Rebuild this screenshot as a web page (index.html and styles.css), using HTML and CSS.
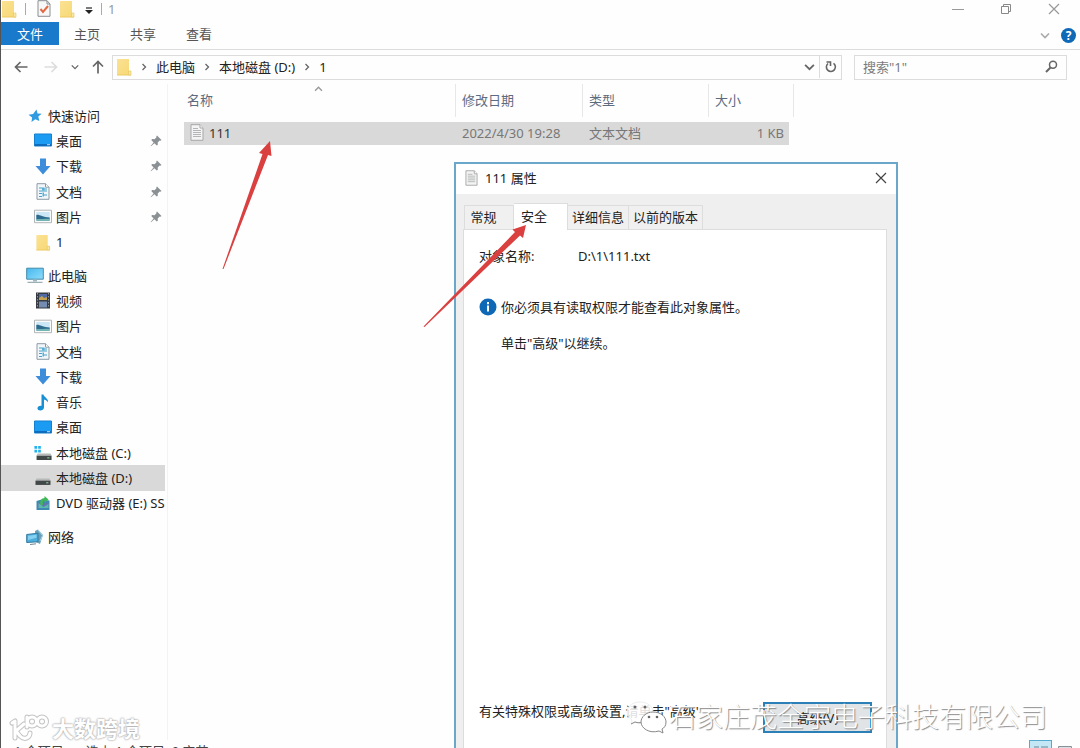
FILE: index.html
```html
<!DOCTYPE html>
<html lang="zh-CN">
<head>
<meta charset="utf-8">
<meta name="viewport" content="width=device-width, initial-scale=1">
<title>1</title>
<link rel="stylesheet" href="styles.css">
</head>
<body>
<svg class="defs" aria-hidden="true">
  <linearGradient id="g-folder" x1="0" y1="0" x2="1" y2="1"><stop offset="0" stop-color="#fbe294"/><stop offset="1" stop-color="#f7d873"/></linearGradient>
  <linearGradient id="g-screen" x1="0" y1="0" x2="1" y2="1"><stop offset="0" stop-color="#45b9ee"/><stop offset="1" stop-color="#8fdcfb"/></linearGradient>
  <symbol id="i-folder" viewBox="0 0 16 18"><path d="M1 1h12v12h2v4H1z" fill="url(#g-folder)"/><path d="M1 16.500h12l2-3v4H1z" fill="#edca62"/><path d="M12.500 13h2.500v4h-2.500z" fill="#fbe7a4" stroke="#e4c35e" stroke-width=".6"/></symbol>
  <symbol id="i-star" viewBox="0 0 14 14"><path d="M8.500.5l1 4 4.200.2-3.400 2.800 1 4.500-4-1.800L3.500 13l.6-4.500L.5 5.700l4.600-.8z" fill="#2f9be0"/></symbol>
  <symbol id="i-desktop" viewBox="0 0 18 14"><path d="M.5.500h17v12H.5z" fill="#1b9cf2" stroke="#1480cf"/><path d="M1 10.500h16v2H1z" fill="#0f6cba"/><path d="M13 10.700h3v1h-3z" fill="#bfe3ff"/></symbol>
  <symbol id="i-down" viewBox="0 0 16 17"><path d="M5 .5h6V8h4.500L8 16.500.5 8H5z" fill="#3d8ddb"/></symbol>
  <symbol id="i-doc" viewBox="0 0 14 17"><path d="M1 .7h8.500L13 4.200v12.100H1z" fill="#f0f6fa" stroke="#8e9ba4"/><path d="M9.500.7v3.500H13" fill="#fff" stroke="#8e9ba4"/><path d="M3 5h3M8 6h3M3 8h8M3 10.500h3M8 12h3M3 13.500h3" stroke="#4b9fc8" stroke-width="1.200"/><path d="M6 4.500h2.500v3H6zM6.500 9.500h1.500v4H6.500z" fill="#56afd4"/></symbol>
  <symbol id="i-picture" viewBox="0 0 18 14"><path d="M.5.7h17v12.500H.5z" fill="#fafafa" stroke="#b2b5b8"/><path d="M2.300 2.500h13.400v9H2.300z" fill="#cbe6f4"/><path d="M2.300 5.500c3-.8 6 2.500 13.400 2.500v2H2.300z" fill="#2d6a8d"/><path d="M2.300 9.700c4 .3 8-.7 13.400-.5v2.300H2.300z" fill="#73b5b4"/></symbol>
  <symbol id="i-pc" viewBox="0 0 18 17"><path d="M.7 1.200h16.600v11H.7z" fill="url(#g-screen)" stroke="#468ba9"/><path d="M7 12.500h4v2H7z" fill="#9eb8c2"/><path d="M1.500 15.300h15" stroke="#849ba5"/></symbol>
  <symbol id="i-video" viewBox="0 0 15 17"><path d="M.5.500h14v16H.5z" fill="#373b43"/><path d="M3.500 2h8v6h-8z" fill="#4f6aa5"/><path d="M3.500 9.500h8v6h-8z" fill="#758bb1"/><path d="M3.500 6l3-2 2 2 3-1v3h-8z" fill="#c4a452"/><path d="M2 1v15M13 1v15" stroke="#8d9298" stroke-dasharray="1.500 1.500"/></symbol>
  <symbol id="i-music" viewBox="0 0 13 17"><path d="M5 .5h2c.5 3 5.300 4 4.500 8-.5-1.500-2-2.500-4-3v7.700c0 4-6.500 4.200-6.500 1.300 0-2 2-3 4-2.500z" fill="#168fd4"/></symbol>
  <symbol id="i-drive" viewBox="0 0 16 14"><path d="M2 7h12l1 2H1z" fill="#b6b9b8"/><path d="M1 9h14v4H1z" fill="#424747"/><path d="M11 11h2" stroke="#95d4a0"/></symbol>
  <symbol id="i-drive-c" viewBox="0 0 16 14"><path d="M0 1h2.500v2.500H0zM3.500 1H6v2.500H3.500zM0 4.500h2.500V7H0zM3.500 4.500H6V7H3.500z" fill="#23b2ef"/><path d="M3 8h12l1 2H2z" fill="#b6b9b8"/><path d="M2 10h14v4H2z" fill="#424747"/><path d="M12 12h2" stroke="#95d4a0"/></symbol>
  <symbol id="i-dvd" viewBox="0 0 15 15"><path d="M1 5l5-1.500 8 1v9.500H1z" fill="#3e8ab1"/><path d="M2 7h11v5H2z" fill="#6174b4"/><path d="M3 7l5 4 5-3v4H3z" fill="#5ab9ad"/><path d="M5 9c-1-4 1-7 4-7V0l4 3.500-4 3v-2C7.500 4.500 7 6 7.500 9z" fill="#41b856"/></symbol>
  <symbol id="i-network" viewBox="0 0 18 17"><path d="M9 2l3-1.500L17 6l-3 9-4-2z" fill="#699fb8"/><path d="M12 1l4.500 5.500L14 12" fill="none" stroke="#a8d8ed"/><path d="M.7 5.500L12 4.200v8.600L.7 13.500z" fill="#4caedd" stroke="#3479a1"/><path d="M2 6.800l8.500-1v3L2 11z" fill="#86d1f1"/><path d="M4 15.500l6-.7" stroke="#6d8997"/></symbol>
  <symbol id="i-text" viewBox="0 0 14 17"><path d="M1 .7h9L13 4v12.300H1z" fill="#f4f4f4" stroke="#a7a7a7"/><path d="M10 .7V4h3" fill="#fff" stroke="#a7a7a7"/><path d="M3 4.500h5M3 6.500h8M3 8.500h8M3 10.500h8M3 12.500h8" stroke="#b3b5b7"/></symbol>
  <symbol id="i-pin" viewBox="0 0 12 12"><path d="M7 .5L11.500 5l-1 .7-.8-.2-2 2 .1 2.300-1 .8-2.400-2.400L1 11.300.6 11l3-3.500L1.300 5l.8-1 2.400.2 2-2-.2-.9z" fill="#8a9093"/></symbol>
  <symbol id="i-chev-r" viewBox="0 0 6 8"><path d="M1.500 1l3 3-3 3" fill="none" stroke="#666" stroke-width="1.300"/></symbol>
  <symbol id="i-chev-d" viewBox="0 0 10 7"><path d="M1 1.500l4 4 4-4" fill="none" stroke="currentColor" stroke-width="1.600"/></symbol>
  <symbol id="i-chev-u" viewBox="0 0 10 7"><path d="M1 5.500l4-4 4 4" fill="none" stroke="currentColor" stroke-width="1.600"/></symbol>
  <symbol id="i-arrow" viewBox="0 0 14 12"><path d="M13.500 6H1.500M6.500 1l-5 5 5 5" fill="none" stroke="currentColor" stroke-width="1.700"/></symbol>
  <symbol id="i-x" viewBox="0 0 12 12"><path d="M1 1l10 10M11 1L1 11" fill="none" stroke="currentColor" stroke-width="1.200"/></symbol>
</svg>

<div class="window">
  <header class="titlebar">
    <svg class="ico-folder"><use href="#i-folder"/></svg>
    <span class="bar"></span>
    <button class="plain check" aria-label="属性"><svg width="14" height="17" viewBox="0 0 14 17"><path d="M1 .7h9L13 4v12.300H1z" fill="#f7f7f7" stroke="#8b8e92"/><path d="M10 .7V4h3" fill="none" stroke="#8b8e92"/><path d="M3.500 9l2.500 3 5-6" fill="none" stroke="#e26a43" stroke-width="2"/></svg></button>
    <button class="plain" aria-label="新建文件夹"><svg class="ico-folder"><use href="#i-folder"/></svg></button>
    <button class="plain more" aria-label="自定义快速访问工具栏"><svg width="8" height="8" viewBox="0 0 8 8"><path d="M1 1h6" stroke="#222" stroke-width="1.200"/><path d="M0 3h8L4 7z" fill="#222"/></svg></button>
    <span class="bar"></span>
    <span class="title">1</span>
    <div class="captions">
      <button class="plain" aria-label="最小化"><svg width="12" height="12" viewBox="0 0 12 12"><path d="M0 6.500h12" stroke="#999"/></svg></button>
      <button class="plain" aria-label="还原"><svg width="12" height="12" viewBox="0 0 12 12"><path d="M1.500 3.500h7v7h-7zM3.500 3.500v-2h7v7h-2" fill="none" stroke="#888"/></svg></button>
      <button class="plain" aria-label="关闭"><svg width="12" height="12"><use href="#i-x"/></svg></button>
    </div>
  </header>

  <nav class="ribbon">
    <button class="file">文件</button>
    <button>主页</button>
    <button>共享</button>
    <button>查看</button>
    <div class="ribbon-end">
      <button class="plain" aria-label="展开功能区"><svg width="10" height="7"><use href="#i-chev-d"/></svg></button>
      <button class="plain help" aria-label="帮助">?</button>
    </div>
  </nav>

  <div class="navrow">
    <div class="arrows">
      <button class="plain" aria-label="后退"><svg width="14" height="12"><use href="#i-arrow"/></svg></button>
      <button class="plain off" aria-label="前进"><svg class="flip" width="14" height="12"><use href="#i-arrow"/></svg></button>
      <button class="plain recent" aria-label="最近位置"><svg width="8" height="6"><use href="#i-chev-d"/></svg></button>
      <button class="plain" aria-label="上移"><svg class="up" width="14" height="12"><use href="#i-arrow"/></svg></button>
    </div>
    <div class="address">
      <svg class="ico-folder"><use href="#i-folder"/></svg>
      <svg class="sep"><use href="#i-chev-r"/></svg><a href="#">此电脑</a>
      <svg class="sep"><use href="#i-chev-r"/></svg><a href="#">本地磁盘 (D:)</a>
      <svg class="sep"><use href="#i-chev-r"/></svg><a href="#">1</a>
      <button class="plain drop" aria-label="以前的位置"><svg width="11" height="8"><use href="#i-chev-d"/></svg></button>
      <button class="plain refresh" aria-label="刷新"><svg width="12" height="13" viewBox="0 0 12 13"><path d="M8.500 3.300A4.500 4.500 0 1 1 3 3.500M1.500 2h4v4" fill="none" stroke="#666" stroke-width="1.600"/></svg></button>
    </div>
    <form class="search">
      <input type="text" aria-label="搜索" placeholder='搜索"1"'>
      <button class="plain" type="button" aria-label="开始搜索"><svg width="13" height="13" viewBox="0 0 13 13"><circle cx="8" cy="4.800" r="3.500" fill="none" stroke="#666" stroke-width="1.500"/><path d="M5.500 7.500L1 12" stroke="#666" stroke-width="2"/></svg></button>
    </form>
  </div>

  <div class="main">
    <aside class="sidebar">
      <ul class="group quick">
        <li><a class="root" href="#"><svg class="ico small"><use href="#i-star"/></svg>快速访问</a></li>
        <li><a href="#"><svg class="ico"><use href="#i-desktop"/></svg>桌面<svg class="pin"><use href="#i-pin"/></svg></a></li>
        <li><a href="#"><svg class="ico"><use href="#i-down"/></svg>下载<svg class="pin"><use href="#i-pin"/></svg></a></li>
        <li><a href="#"><svg class="ico"><use href="#i-doc"/></svg>文档<svg class="pin"><use href="#i-pin"/></svg></a></li>
        <li><a href="#"><svg class="ico"><use href="#i-picture"/></svg>图片<svg class="pin"><use href="#i-pin"/></svg></a></li>
        <li><a href="#"><svg class="ico"><use href="#i-folder"/></svg>1</a></li>
      </ul>
      <ul class="group pc">
        <li><a class="root" href="#"><svg class="ico"><use href="#i-pc"/></svg>此电脑</a></li>
        <li><a href="#"><svg class="ico"><use href="#i-video"/></svg>视频</a></li>
        <li><a href="#"><svg class="ico"><use href="#i-picture"/></svg>图片</a></li>
        <li><a href="#"><svg class="ico"><use href="#i-doc"/></svg>文档</a></li>
        <li><a href="#"><svg class="ico"><use href="#i-down"/></svg>下载</a></li>
        <li><a href="#"><svg class="ico"><use href="#i-music"/></svg>音乐</a></li>
        <li><a href="#"><svg class="ico"><use href="#i-desktop"/></svg>桌面</a></li>
        <li><a href="#"><svg class="ico drive"><use href="#i-drive-c"/></svg>本地磁盘 (C:)</a></li>
        <li class="selected"><a href="#"><svg class="ico drive"><use href="#i-drive"/></svg>本地磁盘 (D:)</a></li>
        <li><a href="#"><svg class="ico drive"><use href="#i-dvd"/></svg>DVD 驱动器 (E:) SS</a></li>
      </ul>
      <ul class="group">
        <li><a class="root" href="#"><svg class="ico"><use href="#i-network"/></svg>网络</a></li>
      </ul>
    </aside>

    <main class="files">
      <table>
        <colgroup><col class="c-name"><col class="c-date"><col class="c-type"><col class="c-size"><col class="c-end"></colgroup>
        <thead>
          <tr><th class="name">名称<svg class="sort" width="9" height="6"><use href="#i-chev-u"/></svg></th><th>修改日期</th><th>类型</th><th>大小</th><th class="end"></th></tr>
        </thead>
        <tbody>
          <tr><td class="name"><span><svg width="14" height="17"><use href="#i-text"/></svg>111</span></td><td>2022/4/30 19:28</td><td>文本文档</td><td class="size">1 KB</td><td class="end"></td></tr>
        </tbody>
      </table>
    </main>
  </div>

  <footer class="status">
    <span>1 个项目</span><span>选中 1 个项目&nbsp; 0 字节</span>
    <div class="views">
      <button class="plain on" aria-label="详细信息"><svg width="16" height="10" viewBox="0 0 16 10"><path d="M1 2h5M8 2h7M1 5h5M8 5h7" stroke="#6d8796"/></svg></button>
      <button class="plain" aria-label="大图标"><svg width="14" height="10" viewBox="0 0 14 10"><path d="M.5.500h13v9H.5z" fill="#d8dee2" stroke="#8b9297"/></svg></button>
    </div>
  </footer>

  <section class="dialog" role="dialog" aria-label="111 属性">
    <div class="dialog-title"><svg width="13" height="16"><use href="#i-text"/></svg><h1>111 属性</h1>
      <button class="plain" aria-label="关闭"><svg width="12" height="12"><use href="#i-x"/></svg></button></div>
    <div class="dialog-body">
      <div class="tabs" role="tablist">
        <button role="tab" class="t-general">常规</button><button role="tab" class="active" aria-selected="true">安全</button><button role="tab" class="t-detail">详细信息</button><button role="tab">以前的版本</button>
      </div>
      <div class="sheet">
        <div class="object"><span>对象名称:</span><span>D:\1\111.txt</span></div>
        <div class="notice">
          <svg width="18" height="18" viewBox="0 0 18 18"><circle cx="9" cy="9" r="8.500" fill="#0f68b5"/><path d="M8 7.500h2v6H8zM8 4h2v2.200H8z" fill="#fff"/></svg>
          <div><p>你必须具有读取权限才能查看此对象属性。</p><p>单击"高级"以继续。</p></div>
        </div>
        <div class="advanced"><p>有关特殊权限或高级设置,请单击"高级"</p><button>高级(V)</button></div>
      </div>
    </div>
  </section>

  <svg class="pointers" width="320" height="200" viewBox="0 0 320 200" aria-hidden="true">
    <path d="M2.500 128L42.500 13l-3.500-1L50 0l1.500 15-3.500-1L3.500 128z" fill="#d9403f"/>
    <path d="M203.500 185.500L295 91l-2.500-2.500L306 84 303 97l-3-2.500L204.500 186z" fill="#d9403f"/>
  </svg>

  <div class="mark company">
    <svg width="42" height="34" viewBox="0 0 42 34"><path d="M17 22c-3 2-6 1-8 0l-4 2 1-4C-4 12 3 2 14 2c8 0 13 5 13 10" fill="#fff" fill-opacity=".85" stroke="#eee"/><path d="M5 24l4-2c3 1 5 1 8 0" fill="none" stroke="#888"/><path d="M27 12c8 0 13 5 13 10 0 4-2 6-4 7l1 4-4-2c-10 3-18-3-18-9 0-5 5-10 12-10z" fill="#fff" stroke="#888"/><g fill="#666"><circle cx="9" cy="7" r="1.500"/><circle cx="19" cy="7" r="1.500"/><circle cx="23" cy="17" r="1.300"/><circle cx="31" cy="17" r="1.300"/></g></svg>
    <span>石家庄茂全宇电子科技有限公司</span>
  </div>
  <div class="mark brand">
    <svg width="40" height="28" viewBox="0 0 40 28" fill="none" stroke-linecap="round" stroke-linejoin="round"><g stroke="#c4c4c4" stroke-width="5"><path d="M3 9l3-2v17M15 10L7 17l4 5c5 5 10 1 10-3"/><path d="M18 13V3"/><circle cx="23" cy="7.500" r="4.500"/><circle cx="33" cy="7.500" r="4.500"/></g><g stroke="#fff" stroke-width="3"><path d="M3 9l3-2v17M15 10L7 17l4 5c5 5 10 1 10-3"/><path d="M18 13V3"/><circle cx="23" cy="7.500" r="4.500"/><circle cx="33" cy="7.500" r="4.500"/></g></svg>
    <span>大数跨境</span>
  </div>
</div>
</body>
</html>
```
FILE: styles.css
```css
* { box-sizing: border-box; }

body {
  margin: 0;
  height: 100vh;
  overflow: hidden;
  background: #fefefe;
  color: #222;
  font: 13px/18px "Noto Sans", "Noto Sans CJK SC", sans-serif;
}

button, input { font: inherit; color: inherit; }
ul, p, h1 { margin: 0; padding: 0; }
ul { list-style: none; }
a { color: inherit; text-decoration: none; }
svg { display: block; flex: none; }

.defs { position: absolute; width: 0; height: 0; }

.plain {
  display: flex;
  align-items: center;
  justify-content: center;
  padding: 0;
  border: 0;
  background: none;
}

.window {
  position: relative;
  display: flex;
  flex-direction: column;
  height: calc(100vh + 16px);
  border-left: 1px solid #555;
}

/* Title bar */
.titlebar { display: flex; align-items: center; gap: 8px; height: 22px; padding: 0 20px 5px 0; }
.ico-folder { width: 16px; height: 18px; }
.bar { width: 1px; height: 12px; background: #aaa; }
.check { margin-left: 3px; }
.more { margin: 4px 0 0 2px; }
.title { margin-left: -2px; color: #999; }
.captions { display: flex; gap: 36px; margin-left: auto; color: #999; }

/* Ribbon */
.ribbon { display: flex; height: 28px; padding-bottom: 4px; border-bottom: 1px solid #dcdcdc; }
.ribbon > button { width: 56px; padding: 0; border: 0; background: none; color: #555; }
.ribbon > .file { width: 58px; background: #1979ca; color: #fff; }
.ribbon-end { display: flex; align-items: center; gap: 11px; margin: 3px 4px 0 auto; color: #aaa; }
.help { width: 15px; height: 15px; border-radius: 50%; background: #1069b6; color: #fff; font-size: 12px; font-weight: bold; line-height: 15px; }

/* Address row */
.navrow { display: flex; align-items: center; height: 34px; padding-right: 13px; }
.arrows { display: flex; align-items: center; justify-content: space-between; width: 111px; padding: 0 6px 0 12px; color: #666; }
.arrows .plain { width: 16px; height: 24px; }
.arrows .off { margin-left: 3px; color: #ddd; }
.arrows .recent { width: 8px; }
.flip { transform: rotate(180deg); }
.up { transform: rotate(90deg); }
.address, .search { display: flex; align-items: center; height: 25px; border: 1px solid #dcdcdc; }
.address { flex: 1; padding: 0 0 1px 3px; }
.sep { width: 6px; height: 8px; margin: 0 9px; }
.drop { width: 20px; margin-left: auto; color: #666; }
.refresh { width: 22px; height: 23px; border-left: 1px solid #dcdcdc; }
.search { width: 213px; margin-left: 12px; padding: 0 8px 1px; }
.search input { flex: 1; min-width: 0; padding: 0; border: 0; outline: 0; background: none; }
.search input::placeholder { color: #7c7c7c; opacity: 1; }

/* Body */
.main { display: flex; flex: 1; min-height: 0; }
.sidebar { width: 167px; padding: 19px 2px 0 0; border-right: 1px solid #f3f3f3; }
.group { display: grid; grid-template-columns: minmax(0, 1fr); grid-auto-rows: 1fr; min-height: 26px; margin-bottom: 8px; }
.quick { height: 152px; }
.pc { height: 253px; }
.group a { display: flex; align-items: center; gap: 4px; height: 100%; padding-left: 33px; overflow: hidden; white-space: nowrap; }
.group .root { padding-left: 25px; }
.ico { width: 18px; height: 17px; }
.ico.small { height: 14px; }
.ico.drive { height: 15px; }
.pin { width: 12px; height: 12px; margin: 0 3px 0 auto; }
.selected { background: #d9d9d9; }

.files { flex: 1; padding-left: 16px; }
table { table-layout: fixed; width: 610px; border-collapse: separate; border-spacing: 0; }
.c-name { width: 272px; }
.c-date { width: 127px; }
.c-type { width: 126px; }
.c-size { width: 80px; }
.c-end { width: 5px; }
th { height: 33px; padding: 0 0 1px 6px; border-right: 1px solid #e7e7e7; color: #5d6b80; font-weight: normal; text-align: left; }
th:nth-child(4) { border-right: 0; }
th.name { position: relative; padding-left: 3px; }
.sort { position: absolute; top: 2px; left: 130px; color: #999; }
tbody::before { content: ""; display: block; height: 5px; }
td { height: 23px; padding: 0 0 2px 6px; background: #d9d9d9; color: #777; }
td.name { color: #333; }
td.name span { display: flex; align-items: center; gap: 5px; }
td.size { padding-right: 5px; text-align: right; }
th.end, td.end { padding: 0; }
td.end { background: none; }

/* Status bar */
.status { display: flex; gap: 22px; height: 24px; padding: 2px 7px 0 13px; color: #444; }
.views { display: flex; gap: 5px; align-items: flex-start; margin-left: auto; }
.views .plain { width: 16px; height: 18px; }
.views .on { width: 23px; height: 20px; margin-top: -2px; border: 1px solid #55a8ce; background: #c4e7f5; }

/* Properties dialog */
.dialog {
  position: absolute;
  top: 162px;
  bottom: 0;
  left: 453px;
  display: flex;
  flex-direction: column;
  width: 444px;
  border: 2px solid #6ba6cb;
  border-bottom: 0;
  background: #efefef;
  isolation: isolate;
}
.dialog-title { display: flex; align-items: center; gap: 7px; height: 30px; padding: 0 9px 3px; background: #fff; }
.dialog-title h1 { font-size: 13px; font-weight: normal; }
.dialog-title .plain { margin-left: auto; color: #444; }
.dialog-body { display: flex; flex: 1; flex-direction: column; padding: 10px 9px 0 7px; }
.tabs { display: flex; align-items: flex-end; height: 25px; padding-left: 1px; }
.tabs button { height: 24px; padding: 0 4px 1px; border: 1px solid #ddd; border-bottom: 0; border-left: 0; background: #f0f0f0; white-space: nowrap; }
.tabs .t-general { width: 50px; padding-right: 15px; border-left: 1px solid #ddd; }
.tabs .active { z-index: 1; width: 54px; height: 27px; margin-bottom: -1px; padding: 0 20px 3px 7px; background: #fff; }
.tabs .t-detail { width: 61px; }
.sheet { display: flex; flex: 1; flex-direction: column; padding: 17px 14px 30px 15px; border: 1px solid #ddd; background: #fff; }
.object { display: grid; grid-template-columns: 99px 1fr; }
.notice { display: flex; gap: 4px; margin-top: 33px; }
.notice p + p { margin-top: 18px; }
.advanced { display: flex; align-items: flex-start; justify-content: space-between; margin-top: auto; white-space: nowrap; }
.advanced button { width: 109px; height: 31px; padding: 0; border: 2px solid #2c80b8; background: #e1e4e6; }

/* Layers over the windows */
.pointers { position: absolute; top: 141px; left: 219px; }
.mark { position: absolute; display: flex; align-items: center; color: #fff; white-space: nowrap; }
.company { top: 698px; left: 625px; gap: 1px; font-size: 27px; font-weight: 300; line-height: 38px; text-shadow: 1px 1px 1px #888; }
.brand { top: 711px; left: 8px; gap: 3px; font-size: 22px; font-weight: bold; line-height: 34px; text-shadow: 0 0 2px #999, 0 0 2px #bbb; }
```
